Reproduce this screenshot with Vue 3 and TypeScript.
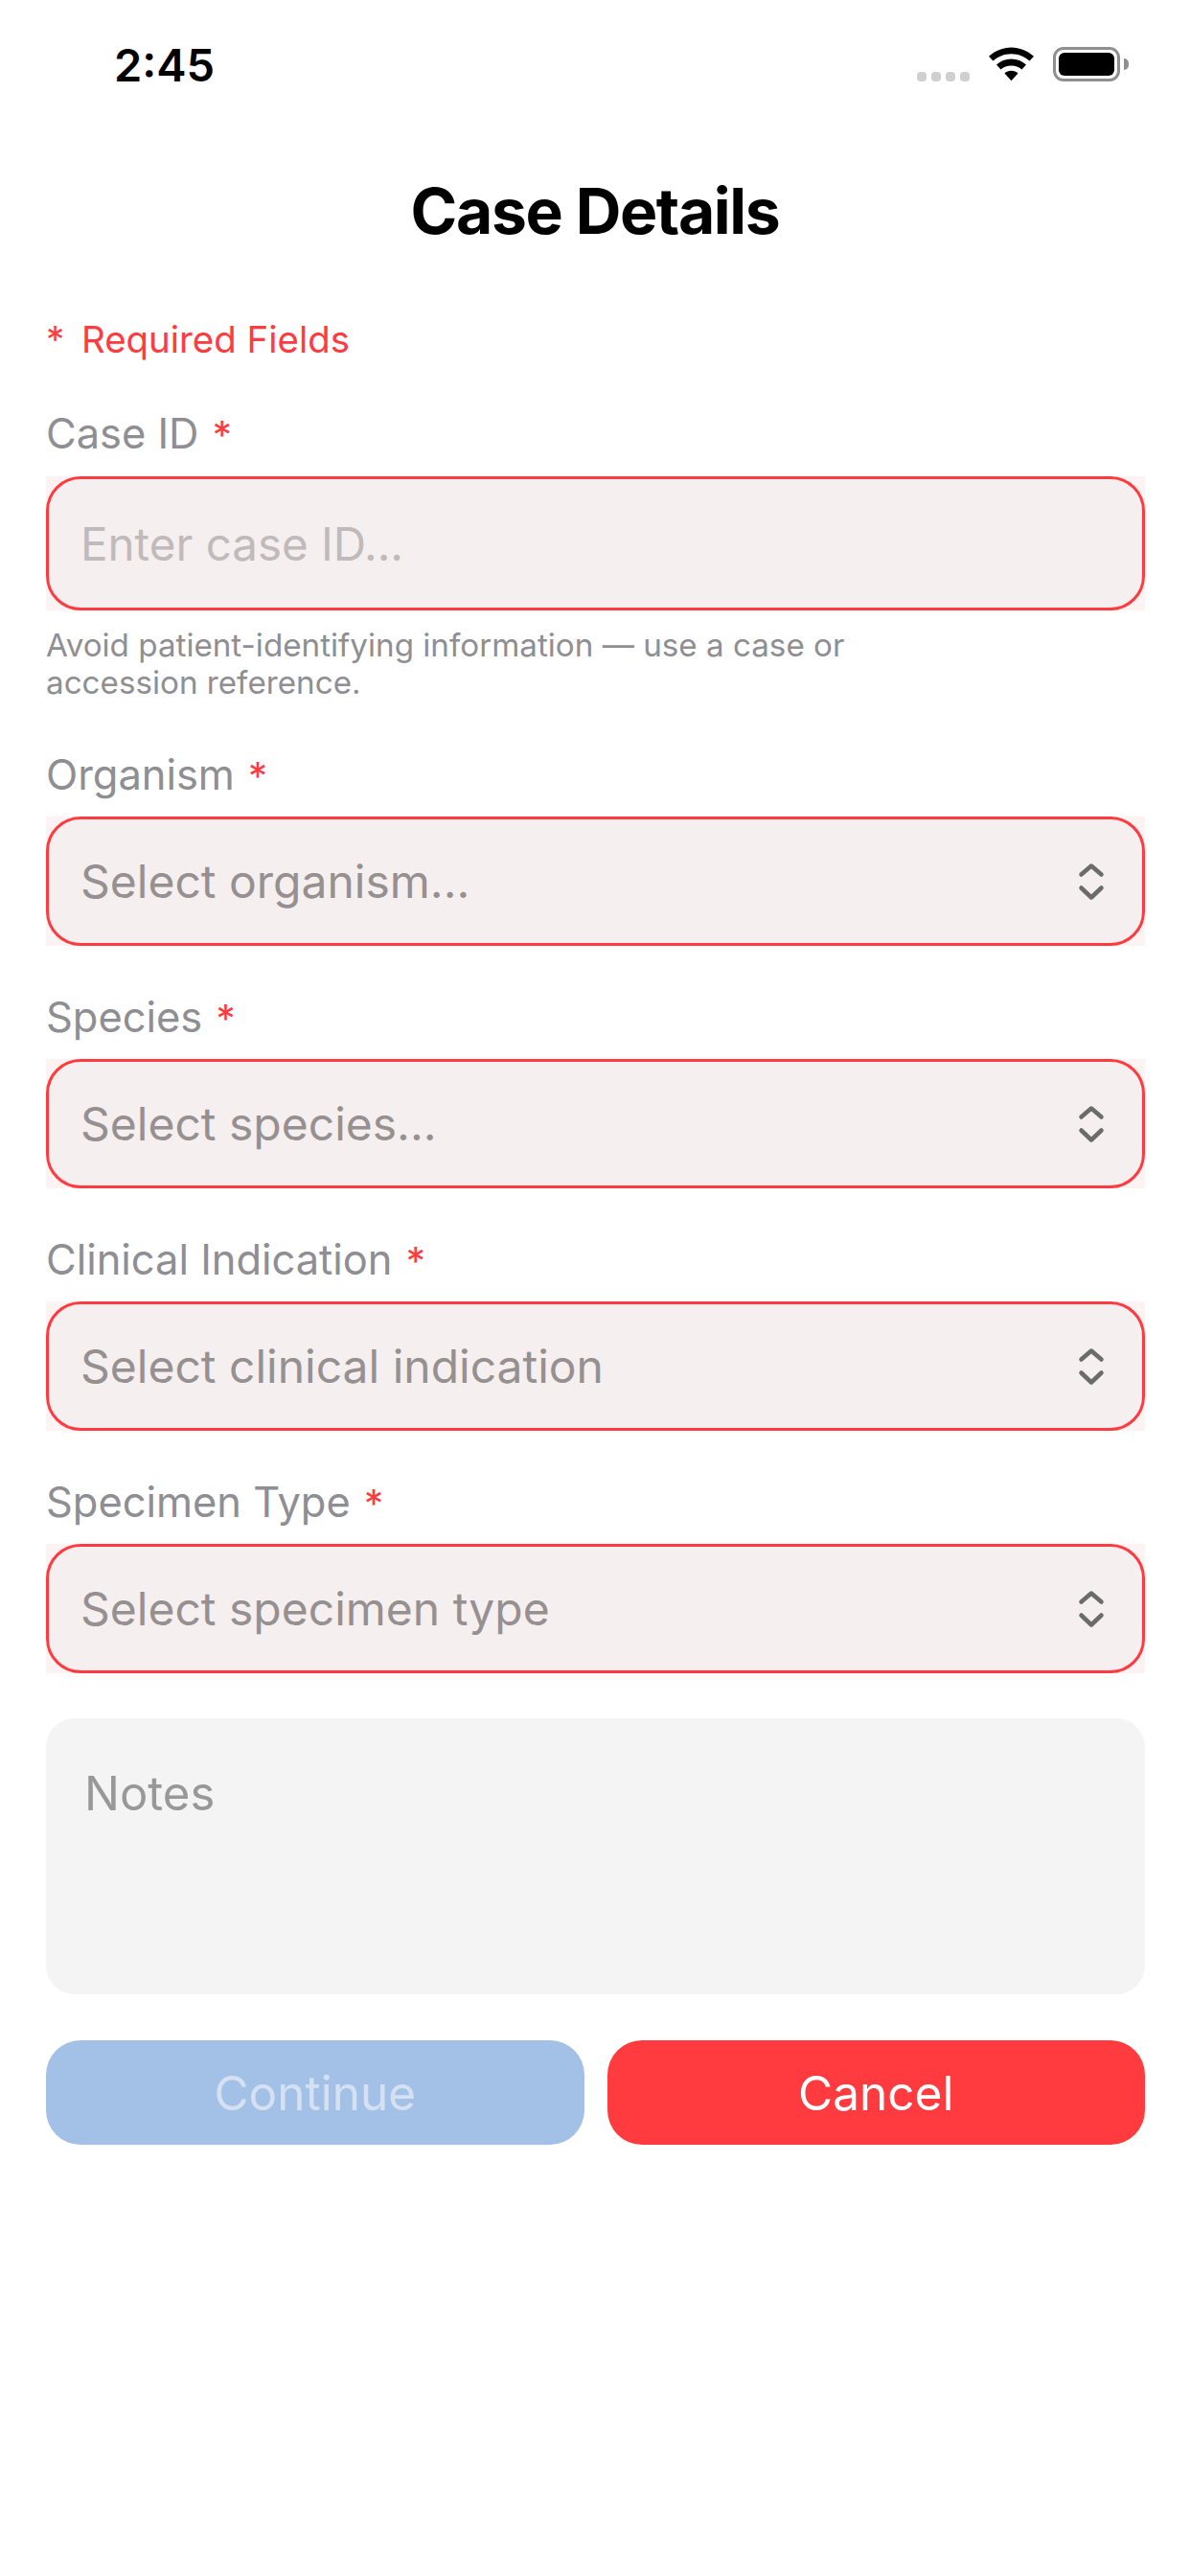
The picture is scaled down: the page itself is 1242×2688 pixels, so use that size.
<script setup lang="ts">
// Case details form, static state with all required fields empty
const selects = [
  { label: 'Organism', placeholder: 'Select organism...' },
  { label: 'Species', placeholder: 'Select species...' },
  { label: 'Clinical Indication', placeholder: 'Select clinical indication' },
  { label: 'Specimen Type', placeholder: 'Select specimen type' },
]
</script>

<template>
  <div class="screen">
    <header class="status">
      <span class="time">2:45</span>
      <div class="status-icons">
        <div class="dots"><i></i><i></i><i></i><i></i></div>
        <svg class="wifi" width="47" height="36" viewBox="0 0 48 36">
          <path d="M24 0C15 0 7 3.500 0 9.500L4.500 14.500C10 9.800 16.500 7 24 7S38 9.800 43.500 14.500L48 9.500C41 3.500 33 0 24 0Z" />
          <path d="M24 12.500C18 12.500 12.500 14.700 8.200 18.500L12.800 23.500C15.800 21 19.700 19.500 24 19.500S32.200 21 35.200 23.500L39.800 18.500C35.500 14.700 30 12.500 24 12.500Z" />
          <path d="M24 25C21.300 25 18.700 26 16.800 27.700L24 35.500L31.200 27.700C29.300 26 26.700 25 24 25Z" />
        </svg>
        <div class="battery">
          <div class="battery-body"><div class="battery-fill"></div></div>
          <div class="battery-cap"></div>
        </div>
      </div>
    </header>

    <h1 class="title">Case Details</h1>

    <main class="form">
      <p class="required-note"><span class="note-star">*</span>Required Fields</p>

      <section class="field">
        <label class="label">Case ID <span class="star">*</span></label>
        <div class="control-back control-back-input">
          <div class="control control-input">Enter case ID...</div>
        </div>
        <p class="hint">Avoid patient-identifying information — use a case or<br />accession reference.</p>
      </section>

      <section v-for="s in selects" :key="s.label" class="field field-select">
        <label class="label">{{ s.label }} <span class="star">*</span></label>
        <div class="control-back control-back-select">
          <div class="control control-select">
            <span>{{ s.placeholder }}</span>
            <svg class="chevrons" width="30" height="40" viewBox="0 0 30 40" fill="none">
              <path d="M4.500 12.500L15 3.500L25.500 12.500" />
              <path d="M4.500 26.500L15 36.500L25.500 26.500" />
            </svg>
          </div>
        </div>
      </section>

      <div class="notes">Notes</div>

      <div class="actions">
        <button class="btn btn-continue">Continue</button>
        <button class="btn btn-cancel">Cancel</button>
      </div>
    </main>
  </div>
</template>

<style scoped>
.screen {
  width: 1242px;
  height: 2688px;
  background: #fff;
  font-family: Inter, "Liberation Sans", sans-serif;
  overflow: hidden;
}
.status {
  height: 136px;
  display: flex;
  justify-content: space-between;
  align-items: flex-start;
  padding: 44px 64px 0 119px;
  box-sizing: border-box;
}
.time {
  font-size: 47px;
  line-height: 48px;
  font-weight: 600;
  color: #000;
}
.status-icons {
  display: flex;
  align-items: flex-end;
  height: 36px;
  margin-top: 5px;
}
.dots {
  display: flex;
  gap: 5px;
  margin-right: 20px;
}
.dots i {
  width: 10px;
  height: 10px;
  border-radius: 4px;
  background: #cfcfcf;
}
.wifi {
  fill: #000;
  margin-right: 20px;
}
.battery {
  display: flex;
  align-items: center;
}
.battery-body {
  width: 70px;
  height: 36px;
  border: 3px solid #8f8f8f;
  border-radius: 11px;
  box-sizing: border-box;
  padding: 3px;
}
.battery-fill {
  height: 100%;
  background: #000;
  border-radius: 6px;
}
.battery-cap {
  width: 5px;
  height: 12px;
  margin-left: 4px;
  background: #8f8f8f;
  border-radius: 0 5px 5px 0;
}
.title {
  margin: 0;
  height: 168px;
  padding-top: 54px;
  box-sizing: border-box;
  line-height: 60px;
  font-size: 66px;
  font-weight: 700;
  letter-spacing: -1.4px;
  text-align: center;
  color: #000;
}
.form {
  padding: 0 47px 0 48px;
}
.required-note {
  margin: 27px 0 0;
  font-size: 38.4px;
  line-height: 46px;
  color: #ff3b40;
}
.note-star {
  display: inline-block;
  width: 37px;
}
.field {
  margin-top: 48px;
}
.field-select {
  margin-top: 47px;
}
.label {
  display: block;
  font-size: 43.4px;
  line-height: 54px;
  color: #8e8e93;
}
.star {
  font-size: 40px;
  line-height: 0;
  color: #ff3b40;
  margin-left: 2px;
}
/* 圆角外有一层很淡的粉色方底 */
.control-back {
  background: #fef3f3;
}
.control-back-input {
  margin-top: 18px;
}
.control-back-select {
  margin-top: 17px;
}
.control {
  border: 3px solid #ff3b40;
  border-radius: 36px;
  background: #f5eff0;
  box-sizing: border-box;
  font-size: 48px;
  padding: 0 33px;
  display: flex;
  align-items: center;
}
.control-input {
  height: 140px;
  font-size: 47.5px;
  color: #c0babb;
}
.control-select {
  height: 135px;
  justify-content: space-between;
  color: #969090;
}
.chevrons {
  stroke: #6b6b6b;
  stroke-width: 4.5;
  stroke-linecap: round;
  stroke-linejoin: round;
  margin-right: 5px;
}
.hint {
  margin: 17px 0 0;
  padding-bottom: 2px;
  font-size: 33.2px;
  line-height: 39px;
  color: #8e8e93;
}
.notes {
  margin-top: 47px;
  height: 288px;
  padding: 52px 40px 0;
  box-sizing: border-box;
  border-radius: 30px;
  background: #f4f4f4;
  font-size: 49px;
  line-height: 54px;
  color: #989898;
}
.actions {
  display: flex;
  gap: 24px;
  margin-top: 48px;
}
.btn {
  flex: 1;
  height: 109px;
  border: 0;
  border-radius: 36px;
  font-family: inherit;
  font-size: 49.5px;
  padding: 0;
}
.btn-continue {
  background: #a3c1e6;
  color: #d5e1f2;
}
.btn-cancel {
  background: #ff3b3f;
  color: #fff;
}
</style>
